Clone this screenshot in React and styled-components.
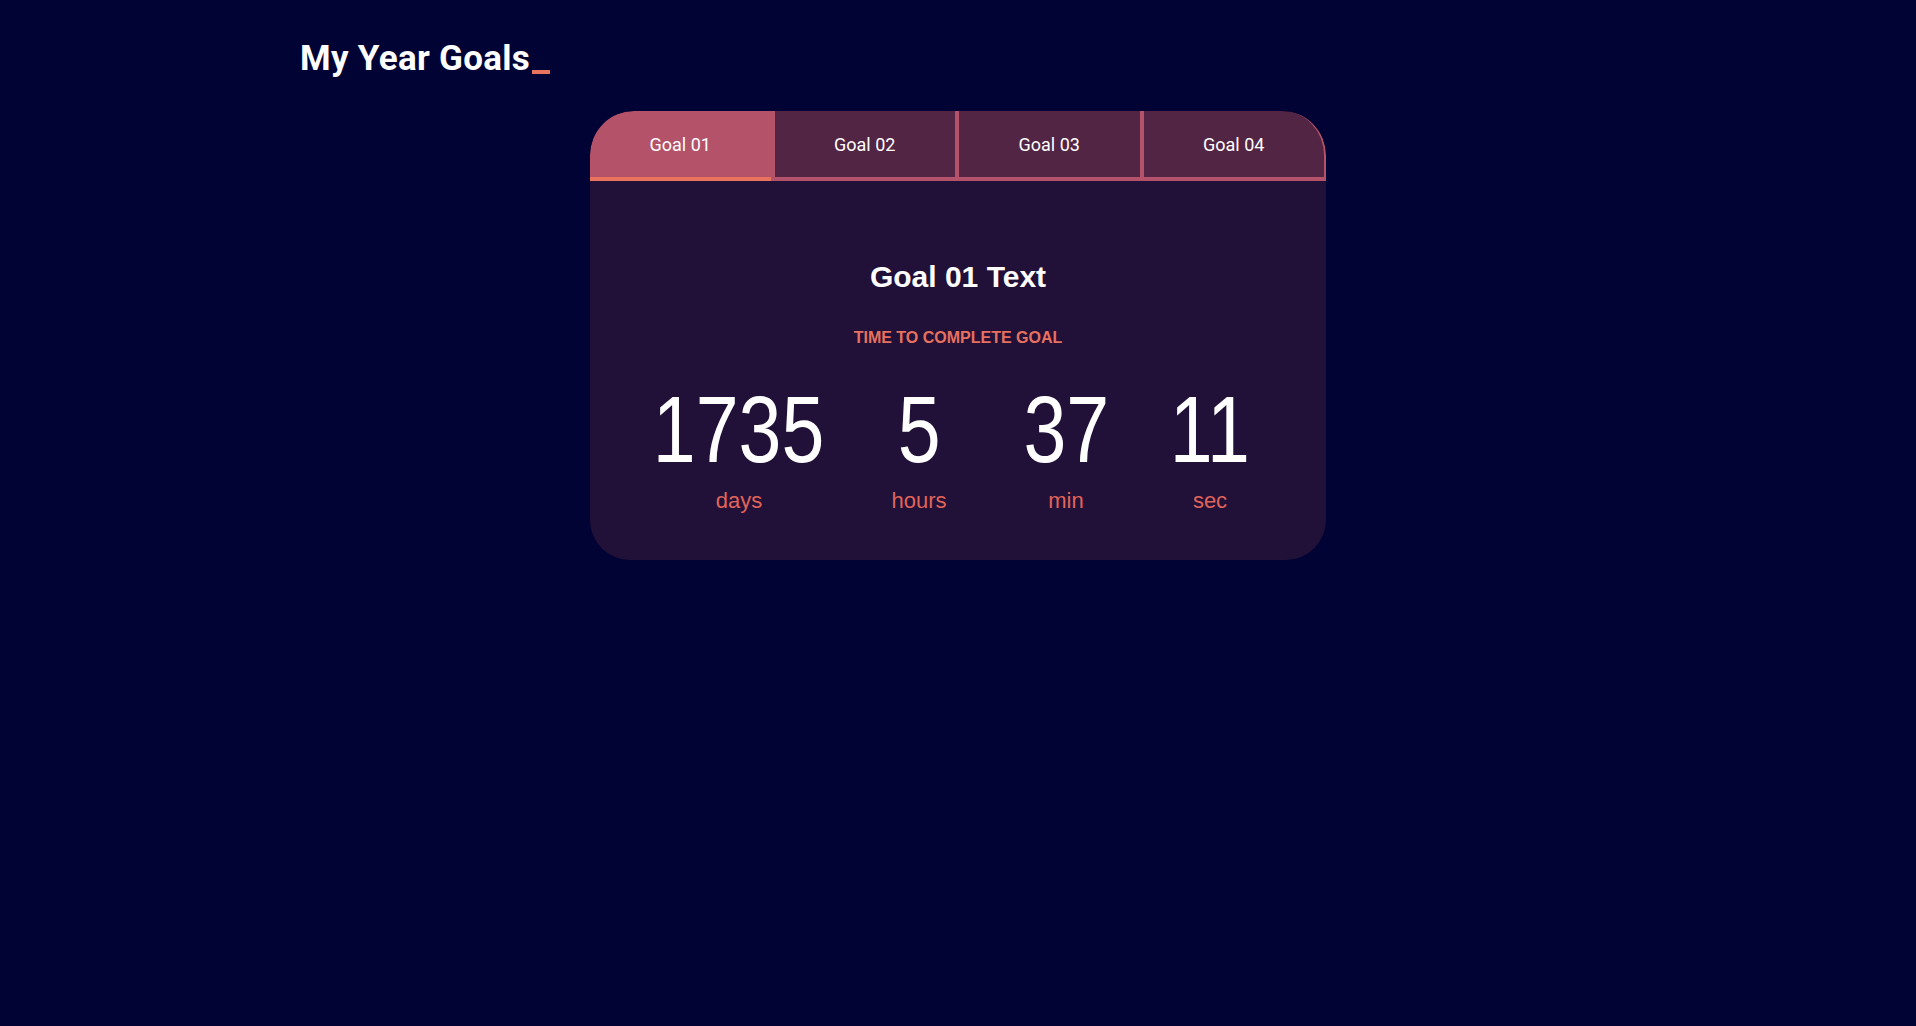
import React, { useState } from 'react';
import styled, { createGlobalStyle } from 'styled-components';

// Global styles
const GlobalStyle = createGlobalStyle`
  html, body {
    margin: 0;
    padding: 0;
    background-color: #010334;
    min-height: 100%;
  }
  body {
    font-family: "Roboto", "Liberation Sans", sans-serif;
    color: #ffffff;
  }
`;

const sans = `"Liberation Sans", "Roboto", sans-serif`;

// Styled components
const Page = styled.div`
  max-width: 1316px;
  margin: 0 auto;
  padding-top: 38px;
  min-height: 1026px;
  box-sizing: border-box;
`;

const Title = styled.h1`
  margin: 0 0 31px 0;
  font-size: 35px;
  line-height: 1.2;
  font-weight: 700;
  letter-spacing: 0.3px;
  color: #ffffff;
`;

const Cursor = styled.span`
  display: inline-block;
  width: 18px;
  height: 4px;
  margin-left: 2px;
  margin-bottom: -4px;
  background-color: #e8735f;
  vertical-align: baseline;
`;

const Card = styled.div`
  width: 736px;
  margin: 0 auto;
  background-color: #211038;
  border-radius: 44px 44px 40px 40px;
  overflow: hidden;
`;

const Tabs = styled.div`
  display: flex;
`;

const Tab = styled.button`
  flex: 1;
  height: 70px;
  border: none;
  border-left: ${(p) => (p.$first ? 'none' : '4px solid #b35269')};
  border-bottom: 4px solid ${(p) => (p.$active ? '#e8735f' : '#b35269')};
  background-color: ${(p) => (p.$active ? '#b35269' : '#532544')};
  color: #ffffff;
  font-family: "Roboto", "Liberation Sans", sans-serif;
  font-size: 18px;
  cursor: pointer;
  padding: 0;
  box-sizing: border-box;

  &:first-child {
    border-top-left-radius: 44px;
  }

  &:last-child {
    border-right: 2px solid #b35269;
    border-top-right-radius: 44px;
  }
`;

const Body = styled.div`
  display: flex;
  flex-direction: column;
  align-items: center;
  padding: 78px 0 45px 0;
`;

const GoalHeading = styled.h2`
  margin: 0;
  font-family: ${sans};
  font-size: 30px;
  line-height: 1.2;
  font-weight: 700;
  color: #ffffff;
`;

const Subtitle = styled.div`
  margin-top: 33px;
  font-family: ${sans};
  font-size: 16px;
  line-height: 1.2;
  font-weight: 700;
  color: #e8705e;
`;

const Countdown = styled.div`
  align-self: stretch;
  display: grid;
  grid-template-columns: 210px 150px 144px 144px;
  margin-top: 36px;
  padding: 0 44px;
`;

const Unit = styled.div`
  display: flex;
  flex-direction: column;
  align-items: center;
`;

const Number = styled.div`
  display: inline-block;
  font-family: ${sans};
  font-size: 94px;
  line-height: 1;
  font-weight: 400;
  color: #ffffff;
  transform: scaleX(0.82);
`;

const Label = styled.div`
  margin-top: 11px;
  font-family: ${sans};
  font-size: 22px;
  line-height: 1.2;
  color: #e0645a;
`;

const goals = ['Goal 01', 'Goal 02', 'Goal 03', 'Goal 04'];

const units = [
    { value: '1735', label: 'days' },
    { value: '5', label: 'hours' },
    { value: '37', label: 'min' },
    { value: '11', label: 'sec' },
];

const App = () => {
    const [active, setActive] = useState(0);

    return (
        <>
            <GlobalStyle />
            <Page>
                <Title>
                    My Year Goals<Cursor />
                </Title>
                <Card>
                    <Tabs>
                        {goals.map((goal, i) => (
                            <Tab
                                key={goal}
                                $first={i === 0}
                                $active={i === active}
                                onClick={() => setActive(i)}
                            >
                                {goal}
                            </Tab>
                        ))}
                    </Tabs>
                    <Body>
                        <GoalHeading>{goals[active]} Text</GoalHeading>
                        <Subtitle>TIME TO COMPLETE GOAL</Subtitle>
                        <Countdown>
                            {units.map((u) => (
                                <Unit key={u.label}>
                                    <Number>{u.value}</Number>
                                    <Label>{u.label}</Label>
                                </Unit>
                            ))}
                        </Countdown>
                    </Body>
                </Card>
            </Page>
        </>
    );
};

export default App;
